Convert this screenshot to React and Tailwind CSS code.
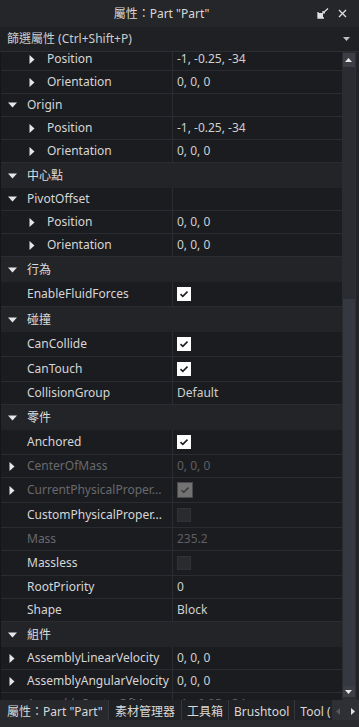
import React from "react";

const FONT = { fontFamily: '"Noto Sans", "Noto Sans CJK TC", sans-serif' };

// list rows, top to bottom (first one is half scrolled away)
const rows = [
  { label: "Position", level: 1, arrow: "right", value: "-1, -0.25, -34", h: 23, first: true },
  { label: "Orientation", level: 1, arrow: "right", value: "0, 0, 0", h: 23 },
  { label: "Origin", level: 0, arrow: "down", value: "", h: 23 },
  { label: "Position", level: 1, arrow: "right", value: "-1, -0.25, -34", h: 23 },
  { label: "Orientation", level: 1, arrow: "right", value: "0, 0, 0", h: 23 },
  { cat: "中心點" },
  { label: "PivotOffset", level: 0, arrow: "down", value: "", h: 23 },
  { label: "Position", level: 1, arrow: "right", value: "0, 0, 0", h: 23 },
  { label: "Orientation", level: 1, arrow: "right", value: "0, 0, 0", h: 23 },
  { cat: "行為" },
  { label: "EnableFluidForces", level: 0, check: "on", h: 25 },
  { cat: "碰撞" },
  { label: "CanCollide", level: 0, check: "on", h: 25 },
  { label: "CanTouch", level: 0, check: "on", h: 25 },
  { label: "CollisionGroup", level: 0, value: "Default", h: 23 },
  { cat: "零件" },
  { label: "Anchored", level: 0, check: "on", h: 25 },
  { label: "CenterOfMass", level: 0, arrow: "right", value: "0, 0, 0", disabled: true, h: 23 },
  { label: "CurrentPhysicalProper...", level: 0, arrow: "right", check: "onDisabled", disabled: true, h: 25 },
  { label: "CustomPhysicalProper...", level: 0, check: "offDisabled", h: 25 },
  { label: "Mass", level: 0, value: "235.2", disabled: true, h: 23 },
  { label: "Massless", level: 0, check: "offDisabled", h: 25 },
  { label: "RootPriority", level: 0, value: "0", h: 23 },
  { label: "Shape", level: 0, value: "Block", h: 23 },
  { cat: "組件" },
  { label: "AssemblyLinearVelocity", level: 0, arrow: "right", value: "0, 0, 0", h: 23 },
  { label: "AssemblyAngularVelocity", level: 0, arrow: "right", value: "0, 0, 0", h: 23 },
  { label: "AssemblyCenterOfMass", level: 0, arrow: "right", value: "-1, -0.25, -34", disabled: true, h: 23 },
];

function Arrow({ dir }) {
  if (dir === "down")
    return (
      <svg width="9" height="6" viewBox="0 0 9 6" className="ml-[1px]">
        <path d="M0 0.5 H9 L4.5 5.5 Z" fill="#e6e6e6" />
      </svg>
    );
  return (
    <svg width="6" height="9" viewBox="0 0 6 9" className="ml-[2px]">
      <path d="M0.5 0 V9 L5.5 4.5 Z" fill="#e6e6e6" />
    </svg>
  );
}

function Check({ kind }) {
  if (kind === "on")
    return (
      <div className="w-[14px] h-[14px] bg-white flex items-center justify-center">
        <svg width="10" height="8" viewBox="0 0 10 8">
          <path d="M1.5 4.2 L3.8 6.3 L8.5 1.6" stroke="#1c1d21" strokeWidth="1.6" fill="none" />
        </svg>
      </div>
    );
  if (kind === "onDisabled")
    return (
      <div className="w-[16px] h-[16px] bg-[#727272] border border-[#4a4a4a] flex items-center justify-center">
        <svg width="10" height="8" viewBox="0 0 10 8">
          <path d="M1.5 4.2 L3.8 6.3 L8.5 1.6" stroke="#3a3a3a" strokeWidth="1.5" fill="none" />
        </svg>
      </div>
    );
  return <div className="w-[14px] h-[14px] bg-[#2a2b2f] border border-[#303136]" />;
}

function Row({ r }) {
  if (r.cat)
    return (
      <div className="h-[25px] shrink-0 bg-[#232428] flex items-center pl-[6px]">
        <div className="w-[12px] flex">
          <Arrow dir="down" />
        </div>
        <span className="ml-[8px] text-[12px] text-[#dcdcdc]">{r.cat}</span>
      </div>
    );
  const textColor = r.disabled ? "text-[#68696c]" : "text-[#d6d6d6]";
  return (
    <div
      className={`shrink-0 flex border-b border-[#2b2c31] bg-[#1b1c20] ${r.first ? "-mt-[4px]" : ""}`}
      style={{ height: r.h }}
    >
      <div
        className={`w-[172px] shrink-0 flex items-center border-r border-[#2b2c31] overflow-hidden ${
          r.level === 1 ? "pl-[26px]" : "pl-[6px]"
        }`}
      >
        <div className="w-[12px] shrink-0 flex">{r.arrow && <Arrow dir={r.arrow} />}</div>
        <span className={`ml-[8px] text-[12px] whitespace-nowrap ${textColor}`}>{r.label}</span>
      </div>
      <div className="flex-1 flex items-center pl-[4px]">
        {r.check ? (
          <Check kind={r.check} />
        ) : (
          <span className={`text-[12px] whitespace-nowrap ${r.disabled ? "text-[#5e5f63]" : "text-[#cfcfcf]"}`}>
            {r.value}
          </span>
        )}
      </div>
    </div>
  );
}

export default function App() {
  return (
    <div className="w-[359px] h-[727px] flex flex-col bg-[#1b1c20] overflow-hidden" style={FONT}>
      {/* title */}
      <div className="h-[27px] shrink-0 bg-[#25262a] flex items-center">
        <div className="flex-1 text-center text-[12px] text-[#d8d8d8] pl-[6px]">屬性：Part "Part"</div>
        <div className="flex items-center gap-[9px] pr-[12px]">
          <svg width="12" height="11" viewBox="0 0 12 11">
            <path d="M1 4 V10 H7" stroke="#e0e0e0" strokeWidth="1.3" fill="none" />
            <rect x="1" y="5" width="5" height="5" fill="#e0e0e0" />
            <path d="M6 5 L11 0.5 M8 5 H6 V3" stroke="#e0e0e0" strokeWidth="1.2" fill="none" />
          </svg>
          <svg width="9" height="9" viewBox="0 0 9 9">
            <path d="M1 1 L8 8 M8 1 L1 8" stroke="#e0e0e0" strokeWidth="1.3" />
          </svg>
        </div>
      </div>

      {/* filter */}
      <div className="h-[25px] shrink-0 bg-[#1f2024] border-b border-[#2d2e33] flex items-center pl-[7px] pr-[9px]">
        <span className="flex-1 text-[12px] text-[#cdcdcd]">篩選屬性 (Ctrl+Shift+P)</span>
        <svg width="7" height="4" viewBox="0 0 7 4">
          <path d="M0 0 H7 L3.5 4 Z" fill="#bdbdbd" />
        </svg>
      </div>

      {/* list + scrollbar */}
      <div className="flex-1 flex overflow-hidden">
        <div className="w-[342px] shrink-0 flex flex-col overflow-hidden border-l border-[#141518]">
          {rows.map((r, i) => (
            <Row key={i} r={r} />
          ))}
        </div>
        <div className="w-[13px] shrink-0 bg-[#2a2c31] flex flex-col items-center pt-[1px]">
          <div className="w-[12px] h-[14px] bg-[#3b3e45] flex items-center justify-center">
            <svg width="7" height="4" viewBox="0 0 7 4">
              <path d="M0 4 H7 L3.5 0 Z" fill="#e6e6e6" />
            </svg>
          </div>
          <div className="h-[232px]" />
          <div className="w-[12px] flex-1 bg-[#353840]" />
          <div className="w-[12px] h-[11px] bg-[#3b3e45] flex items-center justify-center mb-[3px]">
            <svg width="7" height="4" viewBox="0 0 7 4">
              <path d="M0 0 H7 L3.5 4 Z" fill="#e6e6e6" />
            </svg>
          </div>
        </div>
        <div className="w-[4px] shrink-0 bg-[#222327] border-l border-[#2f3035]" />
      </div>

      {/* tabs */}
      <div className="h-[20px] shrink-0 flex bg-[#202125] text-[12px] text-[#d8d8d8]">
        <div className="w-[108px] shrink-0 flex items-center pl-[7px] pt-[3px] bg-[#28292d]">屬性：Part "Part"</div>
        <div className="flex items-center px-[6px] pt-[3px] border-l border-[#36373c]">素材管理器</div>
        <div className="flex items-center px-[5px] pt-[3px] border-l border-[#36373c]">工具箱</div>
        <div className="flex items-center px-[5px] pt-[3px] border-l border-[#36373c]">Brushtool</div>
        <div className="flex-1 flex items-center pl-[5px] pt-[3px] border-l border-[#36373c] overflow-hidden whitespace-nowrap">
          Tool (
        </div>
        <div className="w-[27px] shrink-0 bg-[#2e3035] flex items-center justify-between px-[4px] pt-[2px]">
          <svg width="4" height="7" viewBox="0 0 4 7">
            <path d="M4 0 V7 L0 3.5 Z" fill="#55575c" />
          </svg>
          <svg width="4" height="7" viewBox="0 0 4 7">
            <path d="M0 0 V7 L4 3.5 Z" fill="#e0e0e0" />
          </svg>
        </div>
      </div>
      <div className="h-[7px] shrink-0 bg-[#2a2b2f]" />
    </div>
  );
}
